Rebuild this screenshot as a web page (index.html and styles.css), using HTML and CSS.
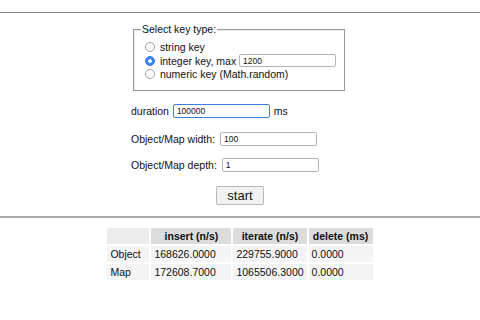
FILE: index.html
```html
<!DOCTYPE html>
<html>
<head>
<meta charset="utf-8">
<link rel="stylesheet" href="styles.css">
</head>
<body>
<hr class="rule-top">
<div class="form">
  <fieldset class="keys">
    <legend>Select key type:</legend>
    <label class="opt"><input type="radio" name="k" class="radio"> string key</label>
    <label class="opt"><input type="radio" name="k" class="radio" checked> integer key, max <input class="field small" type="text" value="1200"></label>
    <label class="opt"><input type="radio" name="k" class="radio"> numeric key (Math.random)</label>
  </fieldset>
  <div class="row row-duration">duration <input class="field focus" type="text" value="100000"> ms</div>
  <div class="row row-width">Object/Map width: <input class="field" type="text" value="100"></div>
  <div class="row row-depth">Object/Map depth: <input class="field" type="text" value="1"></div>
</div>
<div class="actions"><button class="start">start</button></div>
<hr class="rule-bottom">
<table class="results">
  <tr><th class="corner"></th><th class="c-ins">insert (n/s)</th><th class="c-it">iterate (n/s)</th><th class="c-del">delete (ms)</th></tr>
  <tr><td>Object</td><td>168626.0000</td><td>229755.9000</td><td>0.0000</td></tr>
  <tr><td>Map</td><td>172608.7000</td><td>1065506.3000</td><td>0.0000</td></tr>
</table>
</body>
</html>
```
FILE: styles.css
```css
* { box-sizing: border-box; }
body {
  margin: 0;
  font-family: "Liberation Sans", Arial, sans-serif;
  font-size: 10.5px;
  color: #111;
  background: #fff;
}
.rule-top {
  margin: 12px 0 0;
  border: 0;
  border-top: 1px solid #8a8a8a;
  height: 0;
}
.form {
  width: 218px;
  margin: 0 auto;
}
.keys {
  margin: 10px 0 0 2px;
  width: 211px;
  padding: 4.5px 8px 9px 10px;
  border: 1px solid #9a9a9a;
  box-shadow: inset 1px 1px 0 #e8e8e8;
}
.keys legend {
  padding: 0 1px;
  margin-left: -3px;
  line-height: 13px;
}
.opt {
  display: flex;
  align-items: center;
  height: 13.5px;
  white-space: pre;
}
.radio {
  -webkit-appearance: none;
  appearance: none;
  width: 10px;
  height: 10px;
  margin: 0 2px 0 1px;
  border: 1px solid #a0a0a0;
  border-radius: 50%;
  background: #fff;
}
.radio:checked {
  border-color: #2f7af0;
  background: radial-gradient(circle, #fff 0 1.5px, #3b86f5 2.2px);
}
.field {
  width: 97px;
  height: 14px;
  margin: 0 0 0 2px;
  padding: 0 3px;
  border: 1px solid #b5b5b5;
  border-radius: 2px;
  font-family: "Liberation Sans", Arial, sans-serif;
  font-size: 8.5px;
  color: #111;
  background: #fff;
}
.field.small { height: 13px; margin-left: 0; }
.field.focus {
  border: 1.5px solid #3b7fd6;
  outline: none;
}
.row {
  display: flex;
  align-items: center;
  height: 16px;
  white-space: pre;
}
.row-duration { margin-top: 12px; }
.row-duration .field { margin: 0 1px 0 1px; }
.row-width { margin-top: 12px; }
.row-depth { margin-top: 10px; }
.actions {
  display: flex;
  justify-content: center;
  margin-top: 13px;
}
.start {
  width: 48px;
  height: 19px;
  padding: 0;
  border: 1px solid #b9b9b9;
  border-radius: 2px;
  background: #f1f1f1;
  font-family: "Liberation Sans", Arial, sans-serif;
  font-size: 13px;
  color: #111;
}
.rule-bottom {
  margin: 11px 0 0;
  border: 0;
  border-top: 2px solid #ababab;
  height: 0;
}
.results {
  margin: 8px auto 0;
  border-spacing: 2px;
  font-size: 10.5px;
}
.results th {
  background: #dcdcdc;
  font-weight: bold;
  height: 16px;
  padding: 0 4px;
  text-align: center;
}
.results th.corner { background: #ececec; width: 42px; }
.results th.c-ins { width: 80px; }
.results th.c-it { width: 69px; }
.results th.c-del { width: 64px; }
.results td {
  background: #f4f4f4;
  height: 16px;
  padding: 0 3px;
}
```
